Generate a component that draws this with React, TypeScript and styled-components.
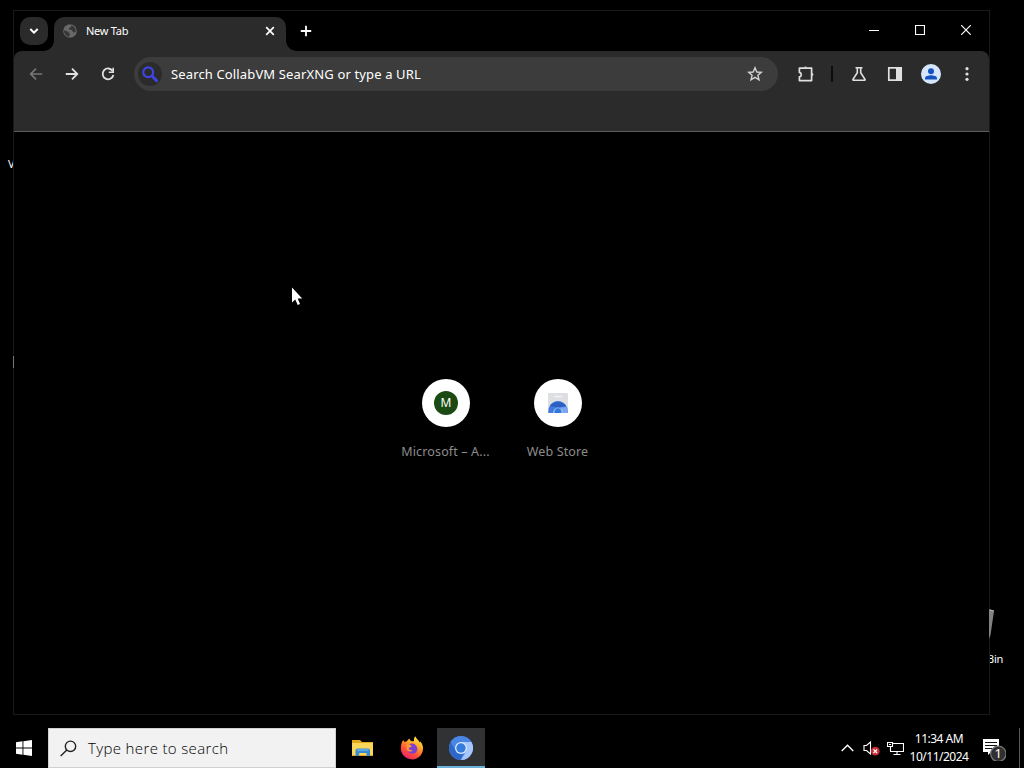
import React from "react";
import styled, { createGlobalStyle } from "styled-components";

const GlobalStyle = createGlobalStyle`
  * { box-sizing: border-box; }
  body { margin: 0; background: #000; overflow: hidden; }
`;

const Desktop = styled.div`
  position: relative;
  width: 1024px;
  height: 768px;
  display: flex;
  flex-direction: column;
  justify-content: flex-end;
  background: #000;
  color: #fff;
  font-family: "Noto Sans", "Open Sans", sans-serif;
  font-size: 12px;
  overflow: hidden;
  cursor: default;
`;

const DesktopItem = styled.div<{ $x: number; $y: number }>`
  position: absolute;
  left: ${(p) => p.$x}px;
  top: ${(p) => p.$y}px;
  font-size: 11px;
  line-height: 16px;
  letter-spacing: -0.2px;
  svg { display: block; }
`;

const ChromeWindow = styled.div`
  position: absolute;
  left: 13px;
  top: 10px;
  width: 977px;
  height: 705px;
  display: flex;
  flex-direction: column;
  border: 1px solid #191919;
  background: #000;
`;

const TitleBar = styled.div`
  display: flex;
  height: 40px;
  flex: none;
  padding-left: 6px;
`;

const TabSearch = styled.div`
  display: grid;
  place-items: center;
  width: 28px;
  height: 28px;
  margin: 6px 6px 0 0;
  border-radius: 10px;
  background: #2b2b2b;
`;

const Tab = styled.div`
  position: relative;
  display: flex;
  align-items: center;
  width: 232px;
  height: 34px;
  margin-top: 6px;
  padding: 0 8px 6px 9px;
  border-radius: 10px 10px 0 0;
  background: #2b2b2b;
  &::before, &::after {
    content: "";
    position: absolute;
    bottom: 0;
    width: 10px;
    height: 10px;
  }
  &::before {
    left: -10px;
    background: radial-gradient(circle at 0 0, transparent 9.5px, #2b2b2b 10px);
  }
  &::after {
    right: -10px;
    background: radial-gradient(circle at 100% 0, transparent 9.5px, #2b2b2b 10px);
  }
`;

const TabTitle = styled.span`
  flex: 1;
  margin-left: 9px;
  font-size: 11px;
  line-height: 16px;
  letter-spacing: -0.25px;
`;

const NewTab = styled.div`
  display: grid;
  place-items: center;
  width: 28px;
  height: 28px;
  margin: 6px 0 0 6px;
`;

const Controls = styled.div`
  display: flex;
  margin-left: auto;
`;

const ControlButton = styled.div`
  display: grid;
  place-items: center;
  width: 46px;
  height: 38px;
`;

const Toolbar = styled.div`
  height: 81px;
  flex: none;
  padding: 5px 4px 0;
  border-radius: 8px 8px 0 0;
  border-bottom: 1px solid #5c5c5c;
  background: #2b2b2b;
`;

const ToolbarRow = styled.div`
  display: flex;
  align-items: center;
  height: 36px;
`;

const ToolButton = styled.div<{ $dim?: boolean }>`
  display: grid;
  place-items: center;
  flex: none;
  width: 36px;
  height: 36px;
  color: ${(p) => (p.$dim ? "#777" : "#e0e0e0")};
`;

const Omnibox = styled.div`
  display: flex;
  align-items: center;
  width: 644px;
  height: 34px;
  margin: 0 10px 0 8px;
  padding: 0 5px 0 4px;
  border-radius: 17px;
  background: #3c3c3c;
`;

const EngineBadge = styled.div`
  display: grid;
  place-items: center;
  width: 24px;
  height: 24px;
  border-radius: 50%;
  background: #2b2b2b;
`;

const Placeholder = styled.span`
  flex: 1;
  margin-left: 9px;
  font-size: 13px;
  line-height: 20px;
  letter-spacing: 0.14px;
  white-space: nowrap;
`;

const Star = styled.div`
  display: grid;
  place-items: center;
  width: 36px;
`;

const Divider = styled.div`
  width: 2px;
  height: 16px;
  margin: 0 8px 0 7px;
  background: #0c0c0c;
`;

const Page = styled.div`
  display: flex;
  flex: 1;
  justify-content: center;
  align-items: flex-start;
  padding-top: 247px;
`;

const Tile = styled.div`
  display: flex;
  flex-direction: column;
  align-items: center;
  width: 112px;
`;

const TileCircle = styled.div`
  display: grid;
  place-items: center;
  width: 48px;
  height: 48px;
  border-radius: 50%;
  background: #fff;
`;

const Letter = styled.div`
  width: 24px;
  height: 24px;
  padding-left: 1px;
  border-radius: 50%;
  background: #1b4a12;
  font-size: 12px;
  line-height: 23px;
  text-align: center;
`;

const TileName = styled.div`
  margin-top: 15px;
  font-size: 12.5px;
  line-height: 20px;
  letter-spacing: 0.14px;
  white-space: nowrap;
  color: #8c8c8c;
`;

const Taskbar = styled.div`
  display: flex;
  height: 40px;
  background: #000;
`;

const TaskButton = styled.div<{ $active?: boolean }>`
  display: grid;
  place-items: center;
  width: 48px;
  height: 40px;
  margin-right: 1px;
  background: ${(p) => (p.$active ? "#303234" : "transparent")};
  box-shadow: ${(p) => (p.$active ? "inset 0 -2px #6cb0dc" : "none")};
`;

const Start = styled.div`
  display: grid;
  place-items: center;
  width: 48px;
`;

const SearchBox = styled.div`
  display: flex;
  align-items: center;
  width: 288px;
  margin-right: 3px;
  padding-left: 11px;
  border: 1px solid #d0d0d0;
  background: #f2f2f2;
  color: #222;
`;

const SearchText = styled.span`
  margin-left: 11px;
  font-family: "Open Sans", "Noto Sans", sans-serif;
  font-size: 15px;
  font-weight: 300;
  line-height: 24px;
  letter-spacing: 0.36px;
  white-space: nowrap;
  color: #000;
`;

const Tray = styled.div`
  display: flex;
  align-items: center;
  margin-left: auto;
`;

const TrayIcon = styled.div`
  display: grid;
  place-items: center;
  width: 24px;
`;

const Clock = styled.div`
  width: 64px;
  padding-bottom: 1px;
  font-size: 12px;
  line-height: 18px;
  letter-spacing: -0.5px;
  text-align: center;
  white-space: nowrap;
`;

const Notifications = styled.div`
  display: grid;
  place-items: center;
  width: 44px;
  margin-right: 4px;
`;

const ShowDesktop = styled.div`
  width: 5px;
  height: 40px;
  border-left: 1px solid #5a5a5a;
`;

const Pointer = styled.svg`
  position: absolute;
  left: 291px;
  top: 287px;
`;

const stroke = (width: number) => ({ fill: "none", stroke: "currentColor", strokeWidth: width });

const Globe = () => (
  <svg width="14" height="14" viewBox="0 0 14 14">
    <circle cx="7" cy="7" r="6.8" fill="#686868" />
    <path d="M1.2 6.2 L4.6 7.4 L6.8 9.4 L6.3 12.8 C2.5 12 .6 9 1.2 6.2Z M8 1.2 C11.5 2 13.2 5 12.6 8 L10.2 8.4 L8.8 6 L6 5.6 L6.2 3.8 L8.3 3Z" fill="#373737" />
  </svg>
);

const Avatar = () => (
  <svg width="20" height="20" viewBox="0 0 20 20">
    <circle cx="10" cy="10" r="10" fill="#d6e6fc" />
    <circle cx="10" cy="7.2" r="3" fill="#1453bd" />
    <path d="M4 15.6 V14.2 C4 12.2 7.5 11.3 10 11.3 S16 12.2 16 14.2 V15.6Z" fill="#1453bd" />
  </svg>
);

const WebStore = () => (
  <svg width="22" height="20" viewBox="0 0 22 20">
    <path d="M1 0H21V20H1Z" fill="#dedfe2" />
    <path d="M7 3.5H15" stroke="#f2f2f4" strokeWidth="1.5" />
    <path d="M1.4 20A9.7 10.5 0 1 1 20.6 20Z" fill="#4379dc" />
    <path d="M3 13A10 10 0 0 1 19 13L15 14H7Z" fill="#2c5fc0" />
    <path d="M15 20A5 5 0 0 0 13 14.5L19.4 14Q20.8 16.5 20.6 20Z" fill="#7ba7f2" />
    <path d="M6 20A5 5.4 0 1 1 16 20Z" fill="#9cc0f7" />
    <path d="M7.6 20A3.5 3.8 0 1 1 14.4 20Z" fill="#2f7ad8" />
  </svg>
);

const Explorer = () => (
  <svg width="22" height="18" viewBox="0 0 22 18">
    <path d="M0 1H8L10 3H21V17H0Z" fill="#e5a91e" />
    <path d="M0 4H21V16H0Z" fill="#fbd65b" />
    <path d="M3.5 17V11.5Q3.5 9.5 5.5 9.5H16Q18 9.5 18 11.5V17H14.5V14H7.2V17Z" fill="#3a8bd0" />
    <path d="M5 11H16.5" stroke="#76b9e9" strokeWidth="1.2" />
  </svg>
);

const Firefox = () => (
  <svg width="24" height="24" viewBox="0 0 24 24">
    <defs>
      <linearGradient id="fox" x1=".8" y1="0" x2=".25" y2="1">
        <stop offset="0" stopColor="#fff04b" />
        <stop offset=".4" stopColor="#ff9c24" />
        <stop offset=".7" stopColor="#ff4b3a" />
        <stop offset="1" stopColor="#e82073" />
      </linearGradient>
    </defs>
    <path d="M3.2 4 C3.5 5 4 5.6 4.8 6 C5.5 5.4 6.3 5.2 7 5.2 C7.7 3.8 8.7 3 9.5 2.6 C9.6 4 10.5 5 12 5.3 L14 5 C13.8 3 14.2 1.5 15.3 .3 C16 2.6 18.5 3.6 19.6 6.5 L20.4 5.5 C22.5 8 23.5 11 22.9 14 C22 19.5 17.8 23.4 12.2 23.4 C6 23.4 1 18.8.8 12.6 C.7 9.5 1.5 6 3.2 4Z" fill="url(#fox)" />
    <path d="M9 8.3 C12 6 17 8.3 17.3 12.5 C17.5 15.7 15.2 17.7 12.4 17.7 C9.3 17.7 7 15.6 7 12.6 L8 11.2 L11.6 10.8 C11.6 9.6 10.5 8.7 9 8.3Z" fill="#7b3fd3" />
    <path d="M6.5 9 C8 8 9.8 8.7 11.7 10 C11 11.4 9.2 11.2 8.6 12.6 C9.3 14 11 14.5 12.8 13.9 C11.8 16 8.3 16.4 6.8 13.7Z" fill="#ff9830" />
  </svg>
);

const Chromium = () => (
  <svg width="24" height="24" viewBox="0 0 24 24">
    <circle cx="12" cy="12" r="12" fill="#477fdc" />
    <path d="M12 6H22.4A12 12 0 0 1 12 24L17.2 15Z" fill="#a6c7fb" />
    <path d="M12 0A12 12 0 0 1 22.4 6H12A6 6 0 0 0 6.8 15L1.6 6A12 12 0 0 1 12 0Z" fill="#4a86e4" />
    <path d="M1.6 6 6.8 15 Q9 18.3 14 17.4L11 24A12 12 0 0 1 1.6 6Z" fill="#2f66c9" />
    <circle cx="12" cy="12" r="6" fill="#dceafe" />
    <circle cx="12" cy="12" r="4.7" fill="#347ddc" />
  </svg>
);

export default function App() {
  return (
    <Desktop>
      <GlobalStyle />
      <DesktopItem $x={8} $y={156}>V</DesktopItem>
      <DesktopItem $x={987} $y={651}>Bin</DesktopItem>
      <ChromeWindow>
        <TitleBar>
          <TabSearch>
            <svg width="12" height="12" viewBox="0 0 12 12"><path d="M2.3 4 6 7.7 9.7 4" {...stroke(2)} /></svg>
          </TabSearch>
          <Tab>
            <Globe />
            <TabTitle>New Tab</TabTitle>
            <svg width="16" height="16" viewBox="0 0 16 16"><path d="M4.2 4.2 11.8 11.8M11.8 4.2 4.2 11.8" {...stroke(1.7)} /></svg>
          </Tab>
          <NewTab>
            <svg width="12" height="12" viewBox="0 0 12 12"><path d="M6 .8V11.2M.8 6H11.2" {...stroke(1.8)} /></svg>
          </NewTab>
          <Controls>
            <ControlButton><svg width="10" height="10"><path d="M0 5.5H10" {...stroke(1)} /></svg></ControlButton>
            <ControlButton><svg width="10" height="10"><path d="M.5.5H9.5V9.5H.5Z" {...stroke(1.2)} /></svg></ControlButton>
            <ControlButton><svg width="10" height="10"><path d="M.2.2 9.8 9.8M9.8.2.2 9.8" {...stroke(1.2)} /></svg></ControlButton>
          </Controls>
        </TitleBar>
        <Toolbar>
          <ToolbarRow>
            <ToolButton $dim>
              <svg width="16" height="16" viewBox="0 0 16 16"><path d="M14.2 8H2.8M8 2.7 2.7 8 8 13.3" {...stroke(1.7)} /></svg>
            </ToolButton>
            <ToolButton>
              <svg width="16" height="16" viewBox="0 0 16 16"><path d="M1.8 8H13.2M8 2.7 13.3 8 8 13.3" {...stroke(1.8)} /></svg>
            </ToolButton>
            <ToolButton>
              <svg width="16" height="16" viewBox="0 0 16 16">
                <path d="M12.7 5A5.4 5.4 0 1 0 13.4 9" {...stroke(1.8)} />
                <path d="M14 1.8V7H8.8V5.4H12.4V1.8Z" fill="currentColor" />
              </svg>
            </ToolButton>
            <Omnibox>
              <EngineBadge>
                <svg width="18" height="18" viewBox="0 0 18 18">
                  <circle cx="7.2" cy="7.2" r="4.9" fill="none" stroke="#3f43df" strokeWidth="2.2" />
                  <path d="M11 11 15.6 15.6" stroke="#3f43df" strokeWidth="3" strokeLinecap="round" />
                </svg>
              </EngineBadge>
              <Placeholder>Search CollabVM SearXNG or type a URL</Placeholder>
              <Star>
                <svg width="16" height="16" viewBox="0 0 16 16"><path d="M8 1.8 9.8 6 14.3 6.4 10.9 9.3 12 13.8 8 11.4 4 13.8 5.1 9.3 1.7 6.4 6.2 6Z" {...stroke(1.4)} stroke="#d2d2d2" /></svg>
              </Star>
            </Omnibox>
            <ToolButton>
              <svg width="18" height="18" viewBox="0 0 18 18">
                <path d="M2.4 3.2H14.6V15.6H2.4V11.9C4.9 11.5 4.9 7.8 2.4 7.4Z" {...stroke(1.7)} strokeLinejoin="round" />
                <path d="M6.8 2.6A1.8 1.8 0 0 1 10.2 2.6ZM15.2 7.8A1.8 1.8 0 0 1 15.2 11.2Z" fill="currentColor" />
              </svg>
            </ToolButton>
            <Divider />
            <ToolButton>
              <svg width="16" height="16" viewBox="0 0 16 16"><path d="M4.5 1.8H11.5M6.3 2V6.8L2 13.3Q1.7 14.2 2.7 14.2H13.3Q14.3 14.2 14 13.3L9.7 6.8V2" {...stroke(1.6)} /></svg>
            </ToolButton>
            <ToolButton>
              <svg width="16" height="16" viewBox="0 0 16 16"><path d="M1.8 1.8H14.2V14.2H1.8Z" {...stroke(1.7)} /><path d="M9 1.5H14.5V14.5H9Z" fill="currentColor" /></svg>
            </ToolButton>
            <ToolButton><Avatar /></ToolButton>
            <ToolButton>
              <svg width="4" height="16" viewBox="0 0 4 16" fill="currentColor"><circle cx="2" cy="2.7" r="1.6" /><circle cx="2" cy="8" r="1.6" /><circle cx="2" cy="13.3" r="1.6" /></svg>
            </ToolButton>
          </ToolbarRow>
        </Toolbar>
        <Page>
          <Tile>
            <TileCircle><Letter>M</Letter></TileCircle>
            <TileName>Microsoft – A...</TileName>
          </Tile>
          <Tile>
            <TileCircle><WebStore /></TileCircle>
            <TileName>Web Store</TileName>
          </Tile>
        </Page>
      </ChromeWindow>
      <DesktopItem $x={989} $y={609}>
        <svg width="6" height="32"><path d="M0 0L5 2 1.5 26 0 30Z" fill="#828282" /><path d="M1 1 5 2" stroke="#bbb" /></svg>
      </DesktopItem>
      <DesktopItem $x={13} $y={356}>
        <svg width="1" height="12"><path d="M.5 0V12" stroke="#777" /></svg>
      </DesktopItem>
      <Pointer width="12" height="19" viewBox="0 0 12 19"><path d="M1 .5V15.5L4.3 12.4 6.7 18 9 17 6.7 11.5H11.2Z" fill="#fff" /></Pointer>
      <Taskbar>
        <Start>
          <svg width="16" height="16" viewBox="0 0 16 16" fill="#fff"><path d="M0 2.2 6.5 1.3V7.5H0ZM7.4 1.2 16 0V7.5H7.4ZM0 8.4H6.5V14.7L0 13.8ZM7.4 8.4H16V16L7.4 14.8Z" /></svg>
        </Start>
        <SearchBox>
          <svg width="17" height="17" viewBox="0 0 17 17"><circle cx="10.5" cy="6.3" r="5.2" {...stroke(1.4)} /><path d="M6.8 10 .7 16.1" {...stroke(1.4)} /></svg>
          <SearchText>Type here to search</SearchText>
        </SearchBox>
        <TaskButton><Explorer /></TaskButton>
        <TaskButton><Firefox /></TaskButton>
        <TaskButton $active><Chromium /></TaskButton>
        <Tray>
          <TrayIcon><svg width="13" height="8" viewBox="0 0 13 8"><path d="M.7 7 6.5 1.2 12.3 7" {...stroke(1.4)} /></svg></TrayIcon>
          <TrayIcon>
            <svg width="17" height="16" viewBox="0 0 17 16">
              <path d="M1 5.5H3.5L7.5 2V14L3.5 10.5H1Z" {...stroke(1.1)} />
              <circle cx="12.3" cy="11.2" r="4.4" fill="#c62b36" />
              <path d="M10.5 9.4 14.1 13M14.1 9.4 10.5 13" stroke="#fff" strokeWidth="1.3" />
            </svg>
          </TrayIcon>
          <TrayIcon>
            <svg width="17" height="15" viewBox="0 0 17 15"><path d="M5.5 2.5H16.5V10.5H3.5V6M10 10.5V13.5M6.5 13.5H13.5M.5 1.5H5.5V5.5H.5ZM2 3.5H4" {...stroke(1.1)} /></svg>
          </TrayIcon>
          <Clock>11:34 AM<br />10/11/2024</Clock>
          <Notifications>
            <svg width="26" height="26" viewBox="0 0 26 26">
              <path d="M3 4H19V17H11L8 20V17H3Z" fill="#fff" />
              <path d="M5 7.5H17M5 10.5H17M5 13.5H12" stroke="#111" strokeWidth="1" />
              <circle cx="18.3" cy="18.8" r="7.7" fill="#303030" stroke="#777" strokeWidth="1.2" />
              <text x="18.3" y="23.2" fill="#fff" fontSize="13" textAnchor="middle">1</text>
            </svg>
          </Notifications>
          <ShowDesktop />
        </Tray>
      </Taskbar>
    </Desktop>
  );
}
